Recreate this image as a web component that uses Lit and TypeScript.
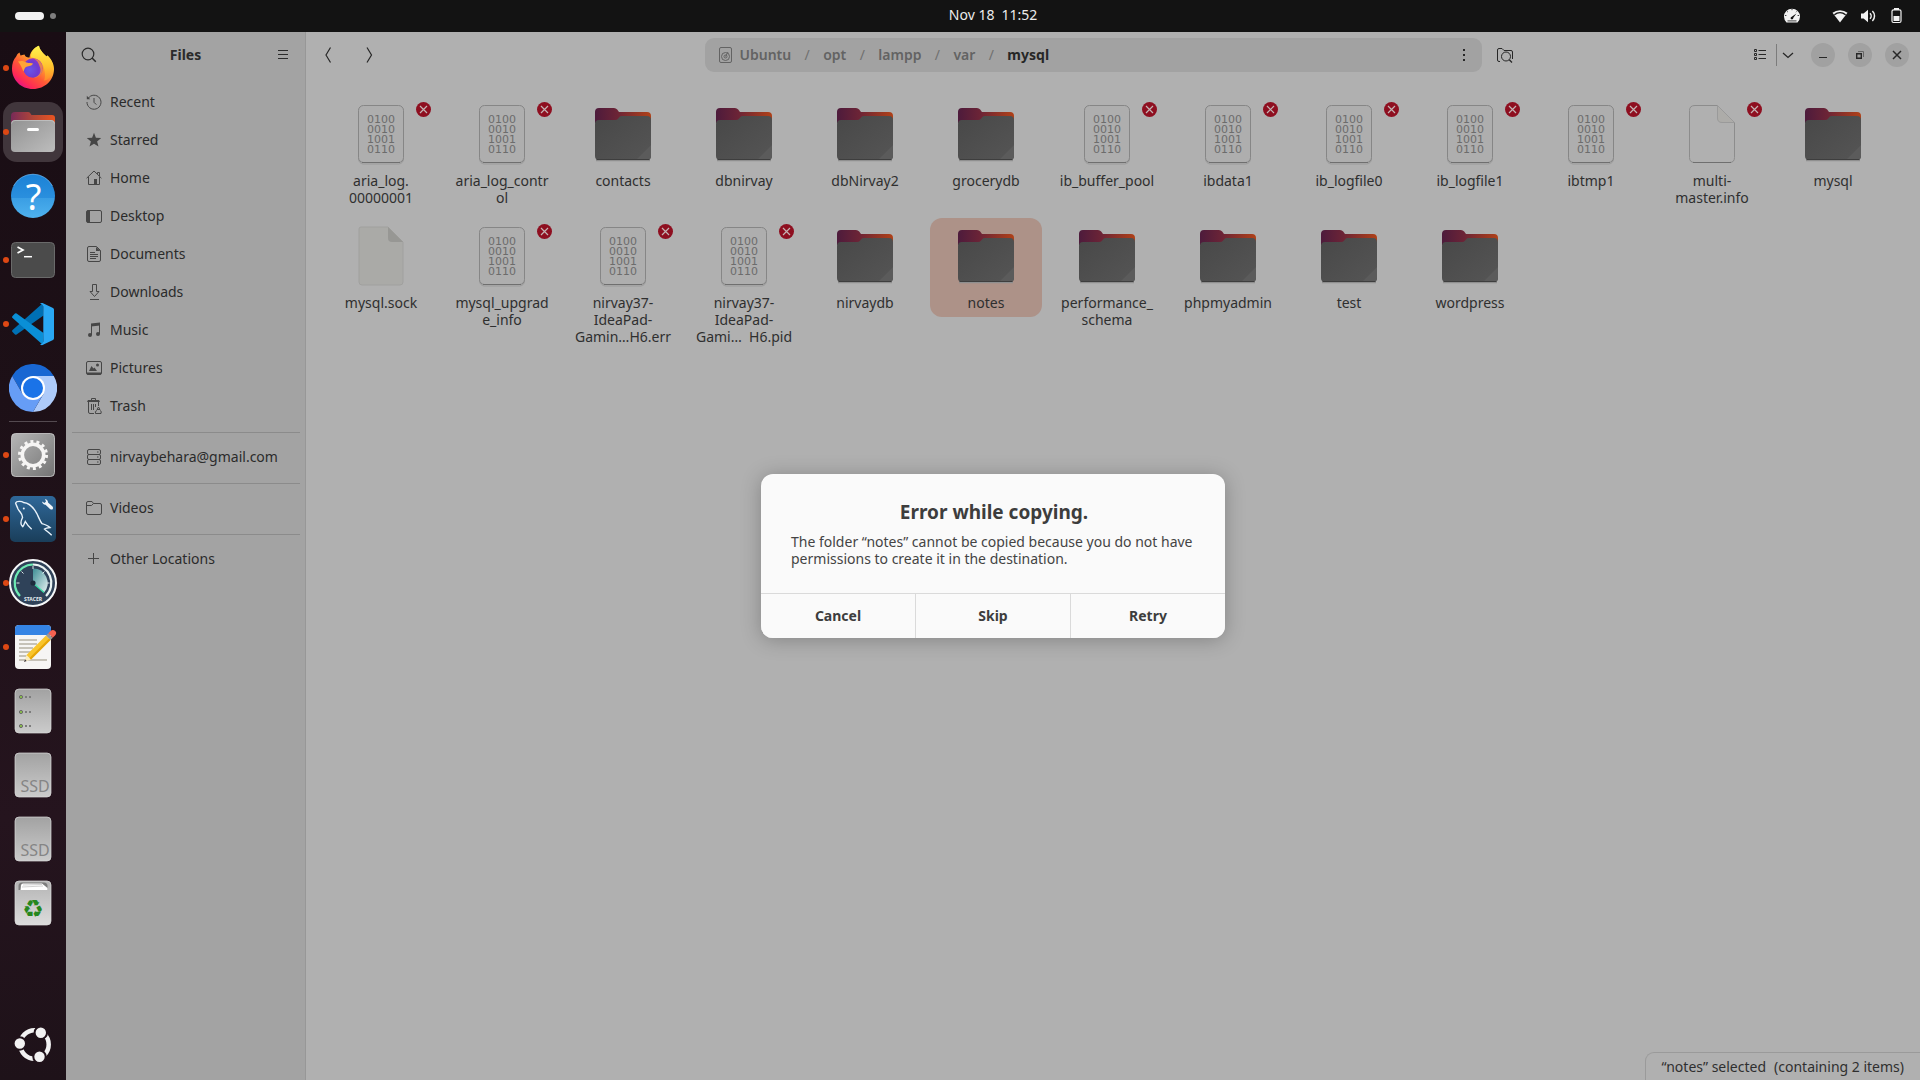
import { LitElement, html, svg, css, nothing, TemplateResult } from "lit";
import { customElement } from "lit/decorators.js";
import { classMap } from "lit/directives/class-map.js";

const base = css`
  * {
    box-sizing: border-box;
  }
  button {
    font: inherit;
    color: inherit;
    background: none;
    border: 0;
    padding: 0;
    margin: 0;
  }
  ul {
    list-style: none;
    margin: 0;
    padding: 0;
  }
  svg {
    display: block;
    flex: none;
  }
`;

/* ---------- Top bar ---------- */

@customElement("desktop-topbar")
export class DesktopTopbar extends LitElement {
  static styles = [
    base,
    css`
      :host {
        display: grid;
        grid-template-columns: 66px 1fr auto 1fr;
        align-items: center;
        height: 32px;
        background: #131313;
        color: #ececec;
      }
      .spaces {
        display: flex;
        align-items: center;
        gap: 6px;
        padding-left: 15px;
      }
      .current {
        width: 29px;
        height: 8px;
        border-radius: 4px;
        background: #f2f2f2;
      }
      .other {
        width: 6px;
        height: 6px;
        border-radius: 3px;
        background: #7f7f7f;
      }
      .clock {
        grid-column: 3;
        display: flex;
        gap: 7px;
        padding-bottom: 2px;
        line-height: 20px;
      }
      .tray {
        display: flex;
        justify-content: flex-end;
        align-items: center;
        gap: 12px;
        padding-right: 16px;
      }
      .gauge {
        margin-right: 20px;
      }
    `,
  ];

  render() {
    return html`
      <button class="spaces" aria-label="Workspaces">
        <span class="current"></span><span class="other"></span>
      </button>
      <button class="clock"><span>Nov 18</span><span>11:52</span></button>
      <div class="tray">
        <svg class="gauge" width="16" height="16" viewBox="0 0 16 16">
          <path d="M2.500 14.500A8 8 0 1 1 13.500 14.500Z" fill="#f2f2f2" />
          <path d="M7 9.200L12.400 5.400L9.200 9.900A1.300 1.300 0 1 1 7 9.200Z" fill="#131313" />
          <path d="M3.500 12.900H12.500" stroke="#131313" stroke-width=".8" />
          <path d="M1 7.500H2.400M8 1V2.200M3.200 3.400L4 4.200M12.800 3.400L12 4.200M13.600 7.500H15" stroke="#131313" stroke-width=".8" />
        </svg>
        <svg width="16" height="16" viewBox="0 0 16 16">
          <path d="M.5 4.800A12 12 0 0 1 15.500 4.800L8 14.500Z" fill="#f2f2f2" />
          <path d="M2.400 6.700A9 9 0 0 1 13.600 6.700" fill="none" stroke="#131313" stroke-width="1.400" />
        </svg>
        <svg width="16" height="16" viewBox="0 0 16 16">
          <path d="M1 5.500H3.600L8 1.800V14.200L3.600 10.500H1Z" fill="#f2f2f2" />
          <path d="M10 5.200A4 4 0 0 1 10 10.800M12.400 3A7 7 0 0 1 12.400 13" fill="none" stroke="#f2f2f2" stroke-width="1.500" />
        </svg>
        <svg width="16" height="16" viewBox="0 0 16 16">
          <path d="M6 0H11V2H6Z" fill="#f2f2f2" />
          <rect x="4" y="1.800" width="9" height="12.700" rx="1.500" fill="none" stroke="#f2f2f2" stroke-width="1.200" />
          <path d="M5.500 8H11.500V13H5.500Z" fill="#f2f2f2" />
        </svg>
      </div>
    `;
  }
}

/* ---------- Dock ---------- */

interface DockApp {
  name: string;
  icon: TemplateResult;
  running?: boolean;
  active?: boolean;
}

const drive = (id: string, face: unknown) => html`
  <svg width="48" height="48" viewBox="0 0 48 48">
    <defs>
      <linearGradient id=${id} x1="0" y1="0" x2="0" y2="1">
        <stop offset="0" stop-color="#a2a2a2" />
        <stop offset="1" stop-color="#cbcbcb" />
      </linearGradient>
    </defs>
    <rect x="6" y="2" width="36" height="44" rx="4" fill="url(#${id})" stroke="#dadada" stroke-opacity=".7" />
    ${face}
  </svg>
`;

const ssdFace = () => svg`<text x="26" y="41" text-anchor="middle" font-size="16" fill="#858585">SSD</text>`;

const serverFace = () => svg`
  <g fill="#8bc34a" stroke="#6b6b6b">
    <circle cx="12" cy="10" r="1.600" />
    <circle cx="12" cy="25" r="1.600" />
    <circle cx="12" cy="39" r="1.600" />
  </g>
  <path d="M16 10H18M20 10H22M16 25H18M20 25H22M16 39H18M20 39H22" stroke="#7d7d7d" stroke-width="2" />
`;

const APPS: DockApp[] = [
  {
    name: "Firefox",
    running: true,
    icon: html`<svg width="48" height="48" viewBox="0 0 48 48">
      <defs>
        <linearGradient id="fx-a" x1=".85" y1=".1" x2=".2" y2=".95">
          <stop offset="0" stop-color="#fff44f" />
          <stop offset=".3" stop-color="#ffb02e" />
          <stop offset=".6" stop-color="#ff5a36" />
          <stop offset=".85" stop-color="#ff2a55" />
          <stop offset="1" stop-color="#e31587" />
        </linearGradient>
        <radialGradient id="fx-b" cx=".35" cy=".6" r=".7">
          <stop offset="0" stop-color="#6a55e8" />
          <stop offset=".6" stop-color="#6f3bd0" />
          <stop offset="1" stop-color="#a632c8" />
        </radialGradient>
        <linearGradient id="fx-c" x1="0" y1="0" x2="0" y2="1">
          <stop offset="0" stop-color="#fff44f" />
          <stop offset=".6" stop-color="#ffc22e" />
          <stop offset="1" stop-color="#ff8a2a" />
        </linearGradient>
      </defs>
      <path d="M24 45C12 45 3 36 3 24.500C3 19.500 4.500 15.500 7 12.800L8.500 10L10.500 8.500L11.500 11.500L15.500 10.500C16.500 13 18 13.600 20.500 13.400C21 9 24 4 30 1.800C30.500 6 34 9 37.500 12.500L38.500 11.500C42 15 45 19.500 45 25C45 36 36 45 24 45Z" fill="url(#fx-a)" />
      <path d="M22 13.500C21.500 8.500 25 3.800 30 1.800C30.500 6 34 9 37.500 12.500L38.500 11.500C42.500 16 45 20 44 27C43 33 39 36 35 36.500C37 33 36 25 33.500 20.500C31 16 27 14 22 13.500Z" fill="url(#fx-c)" />
      <circle cx="24" cy="24" r="9.800" fill="url(#fx-b)" />
      <path d="M9 17.500C12 16.500 15 16.800 17.500 18.500C20 19.200 22.500 19 24 19.500C23 22 20 22 17.500 22.800C15.500 23.500 15.500 26 14.300 27.500C13 24 11.500 20 9 17.500Z" fill="#ffa436" />
      <path d="M25 14.500C30.500 15.500 34.500 20 33.500 26C32.500 31 29 33.500 25 34C31 32 33 27 30.500 22C29.500 19.500 29 17 25 14.500Z" fill="#ff9a2e" opacity=".75" />
    </svg>`,
  },
  {
    name: "Files",
    running: true,
    active: true,
    icon: html`<svg width="48" height="48" viewBox="0 0 48 48">
      <defs>
        <linearGradient id="fi-a" x1="0" y1="0" x2="1" y2="0">
          <stop offset="0" stop-color="#782a58" />
          <stop offset=".5" stop-color="#b04638" />
          <stop offset="1" stop-color="#e95420" />
        </linearGradient>
        <linearGradient id="fi-b" x1="0" y1="0" x2="1" y2="1">
          <stop offset="0" stop-color="#929292" />
          <stop offset="1" stop-color="#bdbdbd" />
        </linearGradient>
      </defs>
      <path d="M2 8Q2 4 6 4H19Q20.500 4 21.300 5.300L22.500 7H43Q46 7 46 10V20H2Z" fill="url(#fi-a)" />
      <rect x="2" y="12" width="44" height="32" rx="4" fill="url(#fi-b)" />
      <path d="M2.500 15.500Q3 12.500 6 12.500H42Q45 12.500 45.500 15.500" fill="none" stroke="#c8c8c8" stroke-opacity=".7" />
      <rect x="18" y="20" width="12" height="3" rx="1.500" fill="#fff" />
    </svg>`,
  },
  {
    name: "Help",
    icon: html`<svg width="48" height="48" viewBox="0 0 48 48">
      <defs>
        <linearGradient id="he-a" x1="0" y1="0" x2="0" y2="1">
          <stop offset="0" stop-color="#1b82d6" />
          <stop offset=".54" stop-color="#2a8fde" />
          <stop offset=".55" stop-color="#3a9ee4" />
          <stop offset="1" stop-color="#4fb2ee" />
        </linearGradient>
      </defs>
      <circle cx="24" cy="24" r="22" fill="url(#he-a)" />
      <path d="M4.500 14A22 22 0 0 1 43.500 14" fill="none" stroke="#7dbcf0" stroke-opacity=".6" />
      <text x="24.500" y="38" text-anchor="middle" font-size="36" fill="#fff">?</text>
    </svg>`,
  },
  {
    name: "Terminal",
    running: true,
    icon: html`<svg width="48" height="48" viewBox="0 0 48 48">
      <rect x="2.500" y="6.500" width="43" height="35" rx="4" fill="#4b4b4b" stroke="#6a6a6a" />
      <path d="M8.500 11L14 14L8.500 17" fill="none" stroke="#fff" stroke-width="1.700" />
      <path d="M15 20.700H23" stroke="#fff" stroke-width="1.500" />
    </svg>`,
  },
  {
    name: "Visual Studio Code",
    running: true,
    icon: html`<svg width="48" height="48" viewBox="0 0 48 48">
      <path d="M34 3L3.300 30.300Q2.800 31 3.300 31.700L6 34.500Q6.800 35 7.600 34.500L34.500 15.500Z" fill="#0070b4" />
      <path d="M34 45L3.300 17.700Q2.800 17 3.300 16.300L6 13.500Q6.800 13 7.600 13.500L34.500 33Z" fill="#0a8fd6" />
      <path d="M33.500 3L44 8Q45 8.600 45 9.800V38.200Q45 39.400 44 40L33.500 45Q32 45.500 31 44Q34 44.500 34.300 41.500V6.500Q34 3.500 31 4Q32 2.500 33.500 3Z" fill="#2aa8f4" />
    </svg>`,
  },
  {
    name: "Chromium",
    icon: html`<svg width="48" height="48" viewBox="0 0 48 48">
      <path d="M3.200 12A24 24 0 0 1 44.800 12H24V24L13.600 30Z" fill="#1967d2" />
      <path d="M44.800 12A24 24 0 0 1 24 48L34.400 30L24 24V12Z" fill="#aecbfa" />
      <path d="M24 48A24 24 0 0 1 3.200 12L13.600 30L24 24L34.400 30Z" fill="#669df6" />
      <circle cx="24" cy="24" r="12" fill="#fff" />
      <circle cx="24" cy="24" r="10" fill="#1a73e8" />
    </svg>`,
  },
];

const WINDOWS: DockApp[] = [
  {
    name: "Settings",
    running: true,
    icon: html`<svg width="48" height="48" viewBox="0 0 48 48">
      <defs>
        <linearGradient id="se-a" x1="0" y1="0" x2="1" y2="1">
          <stop offset="0" stop-color="#b6b6b6" />
          <stop offset="1" stop-color="#747474" />
        </linearGradient>
      </defs>
      <rect x="2.500" y="2.500" width="43" height="43" rx="4" fill="url(#se-a)" stroke="#cfcfcf" stroke-opacity=".8" />
      <circle cx="24" cy="24" r="10.700" fill="none" stroke="#f6f5f4" stroke-width="3.600" />
      <circle cx="24" cy="24" r="13.500" fill="none" stroke="#f6f5f4" stroke-width="3" stroke-dasharray="3 3.059" />
    </svg>`,
  },
  {
    name: "MySQL Workbench",
    running: true,
    icon: html`<svg width="48" height="48" viewBox="0 0 48 48">
      <defs>
        <linearGradient id="my-a" x1="0" y1="0" x2="0" y2="1">
          <stop offset="0" stop-color="#2f6899" />
          <stop offset="1" stop-color="#1a3e5a" />
        </linearGradient>
      </defs>
      <rect x="1" y="1" width="46" height="46" rx="5" fill="url(#my-a)" />
      <path d="M22.700 34.300C20 32 18 29.500 16.300 26.500C15.500 28 15 30.500 13.700 31.700C11.500 30 11.500 26.500 13.500 22.500C13.800 19 11 17.500 9 14C7.800 11 7 9.500 6.600 8C7.500 6 12.500 5.800 14.500 7.500C20 8 24.500 12.500 27.700 18.300C29.500 22 31 26 33 28.600C36 29.500 39 30.500 41 32.500C38.500 32.800 37 33 35.500 34C37.500 36 40.500 38 42.700 40.300" fill="none" stroke="#e8f2fa" stroke-width="1.400" />
      <circle cx="14.800" cy="13.600" r="1" fill="#e8f2fa" />
      <path d="M33 6.500Q33.500 9.500 36.500 9.800L41 14Q42.800 15 43.800 14Q44.500 12.800 43.500 11.500L39 7.500Q39 4.500 36 4L37 6.500L35.500 8Z" fill="#f2f7fb" />
    </svg>`,
  },
  {
    name: "Stacer",
    running: true,
    icon: html`<svg width="48" height="48" viewBox="0 0 48 48">
      <defs>
        <linearGradient id="st-a" x1="0" y1="0" x2="1" y2="1">
          <stop offset="0" stop-color="#3f8f96" />
          <stop offset="1" stop-color="#e4f0f0" />
        </linearGradient>
      </defs>
      <circle cx="24" cy="24" r="23" fill="#2f4259" stroke="#f5f7f8" stroke-width="2" />
      <path d="M11 37A18.500 18.500 0 0 1 24 5.500" fill="none" stroke="#6debb4" stroke-width="2.200" />
      <path d="M24 5.500A18.500 18.500 0 0 1 37 37" fill="none" stroke="#eaf3f3" stroke-width="2.200" />
      <path d="M24 24V9.500A14.500 14.500 0 0 1 35.300 33.200Z" fill="url(#st-a)" />
      <path d="M24 24L35 33.500" stroke="#3be0a8" stroke-width="1.200" />
      <path d="M24 7V10M7.500 24H10.500M37.500 24H40.500M12.500 12.500L14.500 14.500M35.500 12.500L33.500 14.500" stroke="#dfe7ea" />
      <circle cx="24" cy="24" r="2.600" fill="#1d2b3c" />
      <text x="24" y="41.500" text-anchor="middle" font-size="5" font-weight="700" fill="#e6eef2">STACER</text>
    </svg>`,
  },
  {
    name: "Text Editor",
    running: true,
    icon: html`<svg width="48" height="48" viewBox="0 0 48 48">
      <rect x="6" y="2" width="36" height="44" rx="4" fill="#f6f5f4" />
      <path d="M6 12V6Q6 2 10 2H38Q42 2 42 6V12Z" fill="#3584e4" />
      <path d="M10 17H28M10 21H28M10 25H24M10 29H22M10 33H18M10 37H38" stroke="#c6c2b8" stroke-width="1.800" />
      <path d="M15 39L17.500 32L22 36.500Z" fill="#fbeec0" />
      <path d="M15 39L16 36.300L17.700 38Z" fill="#3d3846" />
      <path d="M17.500 32L37 12.500L41.500 17L22 36.500Z" fill="#f9c52b" />
      <path d="M20.500 35L40 15.500L41.500 17L22 36.500Z" fill="#e5a50a" />
      <path d="M37 12.500L39.300 10.200L43.800 14.700L41.500 17Z" fill="#9a9996" />
      <path d="M39.300 10.200L41.500 8Q44 6 46.200 8Q48.300 10.200 46 12.500L43.800 14.700Z" fill="#f66151" />
    </svg>`,
  },
  { name: "Server", icon: drive("dr-a", serverFace()) },
  { name: "SSD volume 1", icon: drive("dr-b", ssdFace()) },
  { name: "SSD volume 2", icon: drive("dr-c", ssdFace()) },
  {
    name: "Trash",
    icon: html`<svg width="48" height="48" viewBox="0 0 48 48">
      <defs>
        <linearGradient id="tr-a" x1="0" y1="0" x2="0" y2="1">
          <stop offset="0" stop-color="#b4b4b4" />
          <stop offset="1" stop-color="#dcdcdc" />
        </linearGradient>
      </defs>
      <rect x="6" y="2" width="36" height="44" rx="4" fill="url(#tr-a)" stroke="#dedede" stroke-opacity=".7" />
      <path d="M9.500 11V7Q9.500 3.500 13 3.500H35Q38.500 3.500 38.500 7V11Z" fill="#7c7c7c" />
      <path d="M11.500 11L12 6.500Q12.300 4.500 14 4.500H33L38.500 9V11Z" fill="#fff" />
      <path d="M13 8L34 7M14 6L33 5.500" stroke="#bdbdbd" stroke-width=".7" />
      <text class="recycle" x="24" y="38" text-anchor="middle" font-size="24" fill="#26871d">♻</text>
    </svg>`,
  },
];

@customElement("desktop-dock")
export class DesktopDock extends LitElement {
  static styles = [
    base,
    css`
      :host {
        display: flex;
        flex-direction: column;
        width: 66px;
        padding: 4px 3px;
        background: linear-gradient(#190d14, #1d1017 35%, #25141e 75%, #1e1219);
      }
      .slot {
        padding: 2px 0;
      }
      .app {
        display: flex;
        align-items: center;
        justify-content: center;
        position: relative;
        width: 60px;
        height: 60px;
        border-radius: 14px;
      }
      .active {
        background: #41363c;
      }
      .running::before {
        content: "";
        position: absolute;
        left: 0;
        top: 27px;
        width: 6px;
        height: 6px;
        border-radius: 3px;
        background: #dd4814;
      }
      .split {
        height: 1px;
        margin: 1px 6px;
        background: #544a50;
      }
      .grow {
        flex: 1;
      }
      .recycle {
        font-family: "DejaVu Sans", sans-serif;
      }
    `,
  ];

  private slotFor(app: DockApp) {
    return html`<li class="slot">
      <button
        class=${classMap({ app: true, active: !!app.active, running: !!app.running })}
        aria-label=${app.name}
      >
        ${app.icon}
      </button>
    </li>`;
  }

  render() {
    return html`
      <ul>${APPS.map((a) => this.slotFor(a))}</ul>
      <div class="split"></div>
      <ul class="grow">${WINDOWS.map((a) => this.slotFor(a))}</ul>
      <div class="slot">
        <button class="app" aria-label="Show Applications">
          <svg width="48" height="48" viewBox="0 0 48 48">
            <circle cx="25.500" cy="24.500" r="14.200" fill="none" stroke="#f2f2f2" stroke-width="4.500" />
            <g fill="#f2f2f2" stroke="#21131b" stroke-width="2">
              <circle cx="31.800" cy="12.700" r="6.200" />
              <circle cx="10.800" cy="23.500" r="6.200" />
              <circle cx="30.500" cy="36.700" r="6.200" />
            </g>
          </svg>
        </button>
      </div>
    `;
  }
}

/* ---------- Sidebar ---------- */

interface Place {
  label: string;
  icon: TemplateResult;
}

const PLACES: Place[][] = [
  [
    {
      label: "Recent",
      icon: html`<svg width="16" height="16" viewBox="0 0 16 16">
        <path d="M2.200 4.300A7 7 0 1 1 1 8M8 4V8.300L10.300 10.600" fill="none" stroke="currentColor" />
        <path d="M.8 1.800V5.200H4.200Z" fill="currentColor" />
      </svg>`,
    },
    {
      label: "Starred",
      icon: html`<svg width="16" height="16" viewBox="0 0 16 16">
        <path d="M8 .8L9.900 5.800L15.200 6.100L11.100 9.400L12.500 14.600L8 11.700L3.500 14.600L4.900 9.400L.8 6.100L6.100 5.800Z" fill="currentColor" />
      </svg>`,
    },
    {
      label: "Home",
      icon: html`<svg width="16" height="16" viewBox="0 0 16 16">
        <path d="M.6 8.200L8 1L15.400 8.200M2.500 7V14.500H13.500V7M11.500 4V2.500H13.500V6" fill="none" stroke="currentColor" />
        <path d="M8 9H11V14.500H8Z" fill="currentColor" />
      </svg>`,
    },
    {
      label: "Desktop",
      icon: html`<svg width="16" height="16" viewBox="0 0 16 16">
        <rect x=".5" y="2.500" width="15" height="12" rx="1.500" fill="none" stroke="currentColor" />
        <path d="M1 2.500H4V14.500H1Z" fill="currentColor" />
      </svg>`,
    },
    {
      label: "Documents",
      icon: html`<svg width="16" height="16" viewBox="0 0 16 16">
        <path d="M3 .5H10.500L14.500 4.500V14Q14.500 15.500 13 15.500H3Q1.500 15.500 1.500 14V2Q1.500 .5 3 .5ZM4 6.500H9M4 8.500H12M4 10.500H12M4 12.500H10" fill="none" stroke="currentColor" />
        <path d="M10 1V5H14.500Z" fill="currentColor" />
      </svg>`,
    },
    {
      label: "Downloads",
      icon: html`<svg width="16" height="16" viewBox="0 0 16 16">
        <path d="M6.500 .5H10.500V7.500H13L8.500 12.500L4 7.500H6.500ZM4 15.500H13" fill="none" stroke="currentColor" />
      </svg>`,
    },
    {
      label: "Music",
      icon: html`<svg width="16" height="16" viewBox="0 0 16 16">
        <path d="M5 1.500L14 .5V3.500L5 4.500Z" fill="currentColor" />
        <path d="M5.500 3V13M13.500 2V12" stroke="currentColor" />
        <circle cx="4" cy="13" r="2" fill="currentColor" />
        <circle cx="12" cy="12" r="2" fill="currentColor" />
      </svg>`,
    },
    {
      label: "Pictures",
      icon: html`<svg width="16" height="16" viewBox="0 0 16 16">
        <rect x=".5" y="1.500" width="15" height="13" rx="1.500" fill="none" stroke="currentColor" />
        <path d="M1 12.500H15V14.500H1ZM3 11L5.500 6L7.500 8.500L8.500 7.500L11 11Z" fill="currentColor" />
        <circle cx="11.500" cy="5" r="1.500" fill="currentColor" />
      </svg>`,
    },
    {
      label: "Trash",
      icon: html`<svg width="16" height="16" viewBox="0 0 16 16">
        <path d="M5.500 2V.5H9.500V2M2.500 4V14Q2.500 15.500 4 15.500H8M12.500 4V8M5.500 6V12M7.500 6V12M9.500 6V9" fill="none" stroke="currentColor" />
        <path d="M2 2H13L14 4H1Z" fill="currentColor" />
        <path d="M12.500 9L14 11.500H11ZM11 12.500Q8.500 13 9.500 15.500H15Q16 13 14 12.500" fill="none" stroke="currentColor" />
      </svg>`,
    },
  ],
  [
    {
      label: "nirvaybehara@gmail.com",
      icon: html`<svg width="16" height="16" viewBox="0 0 16 16">
        <path d="M3 .5H13Q14.500 .5 14.500 2V4Q14.500 5.500 13 5.500H3Q1.500 5.500 1.500 4V2Q1.500 .5 3 .5ZM3 5.500Q1.500 5.500 1.500 7V9Q1.500 10.500 3 10.500H13Q14.500 10.500 14.500 9V7Q14.500 5.500 13 5.500M3 10.500Q1.500 10.500 1.500 12V14Q1.500 15.500 3 15.500H13Q14.500 15.500 14.500 14V12Q14.500 10.500 13 10.500" fill="none" stroke="currentColor" />
        <path d="M11 3H12.500M11 8H12.500M11 13H12.500" stroke="currentColor" />
      </svg>`,
    },
  ],
  [
    {
      label: "Videos",
      icon: html`<svg width="16" height="16" viewBox="0 0 16 16">
        <path d="M2 1.500H6L7.500 3.500H14Q15.500 3.500 15.500 5V13Q15.500 14.500 14 14.500H2Q.5 14.500 .5 13V3Q.5 1.500 2 1.500ZM.5 5.500H5.500L7.500 3.500" fill="none" stroke="currentColor" />
      </svg>`,
    },
  ],
  [
    {
      label: "Other Locations",
      icon: html`<svg width="16" height="16" viewBox="0 0 16 16">
        <path d="M7.500 2V13M2 7.500H13" stroke="currentColor" />
      </svg>`,
    },
  ],
];

@customElement("files-sidebar")
export class FilesSidebar extends LitElement {
  static styles = [
    base,
    css`
      :host {
        display: block;
        width: 240px;
        background: #a3a3a3;
        border-right: 1px solid #979797;
        color: #2b2b2b;
      }
      .header {
        display: flex;
        align-items: center;
        justify-content: space-between;
        height: 46px;
        padding: 0 6px;
      }
      .tool {
        display: flex;
        align-items: center;
        justify-content: center;
        width: 34px;
        height: 34px;
      }
      .title {
        margin: 0;
        font-size: 14px;
        font-weight: 700;
      }
      .places {
        padding-top: 5px;
      }
      .place {
        display: flex;
        align-items: center;
        gap: 8px;
        height: 38px;
        padding-left: 20px;
        color: inherit;
        text-decoration: none;
        white-space: nowrap;
      }
      .place svg {
        color: #464646;
      }
      .rule {
        height: 1px;
        margin: 7px 5px 5px 6px;
        background: #8b8b8b;
      }
    `,
  ];

  render() {
    return html`
      <div class="header">
        <button class="tool" aria-label="Search">
          <svg width="16" height="16" viewBox="0 0 16 16">
            <circle cx="7" cy="7" r="5.800" fill="none" stroke="currentColor" stroke-width="1.200" />
            <path d="M11 11L14.800 14.800" stroke="currentColor" stroke-width="1.500" />
          </svg>
        </button>
        <h1 class="title">Files</h1>
        <button class="tool" aria-label="Main menu">
          <svg width="16" height="16" viewBox="0 0 16 16">
            <path d="M4 3.500H14M4 7.500H14M4 11.500H14" stroke="currentColor" />
          </svg>
        </button>
      </div>
      <nav class="places">
        ${PLACES.map(
          (group, i) => html`
            ${i ? html`<div class="rule"></div>` : nothing}
            ${group.map((p) => html`<a class="place" href="#">${p.icon}<span>${p.label}</span></a>`)}
          `
        )}
      </nav>
    `;
  }
}

/* ---------- Header bar ---------- */

@customElement("files-header")
export class FilesHeader extends LitElement {
  static styles = [
    base,
    css`
      :host {
        display: grid;
        grid-template-columns: 1fr minmax(0, 817px) 1fr;
        align-items: center;
        height: 46px;
        color: #272727;
      }
      .group {
        display: flex;
        align-items: center;
        gap: 6px;
      }
      .nav {
        padding-left: 6px;
      }
      .tool {
        display: flex;
        align-items: center;
        justify-content: center;
        width: 34px;
        height: 34px;
      }
      .path {
        display: flex;
        align-items: center;
        flex: 1;
        height: 34px;
        padding-left: 12px;
        border-radius: 9px;
        background: #a2a2a2;
        font-weight: 600;
        color: #636363;
      }
      .crumb {
        display: flex;
        align-items: center;
        gap: 7px;
      }
      .slash {
        width: 32px;
        text-align: center;
        font-weight: 400;
        color: #707070;
      }
      .here {
        color: #272727;
        font-weight: 700;
      }
      .more {
        margin-left: auto;
        width: 36px;
        color: #272727;
      }
      .end {
        display: flex;
        align-items: center;
        justify-content: flex-end;
        padding-right: 11px;
      }
      .bar {
        width: 1px;
        height: 22px;
        background: #7c7c7c;
      }
      .narrow {
        width: 24px;
        margin-right: 10px;
      }
      .window {
        display: flex;
        gap: 13px;
      }
      .round {
        display: flex;
        align-items: center;
        justify-content: center;
        width: 24px;
        height: 24px;
        border-radius: 12px;
        background: #a1a1a1;
      }
    `,
  ];

  render() {
    const parents = ["opt", "lampp", "var"];
    return html`
      <div class="group nav">
        <button class="tool" aria-label="Back">
          <svg width="16" height="16" viewBox="0 0 16 16">
            <path d="M9.500 .5L5 8L9.500 15.500" fill="none" stroke="currentColor" stroke-width="1.200" />
          </svg>
        </button>
        <button class="tool" aria-label="Forward">
          <svg width="16" height="16" viewBox="0 0 16 16">
            <path d="M6 .5L10.500 8L6 15.500" fill="none" stroke="currentColor" stroke-width="1.200" />
          </svg>
        </button>
      </div>
      <div class="group">
        <div class="path">
          <button class="crumb">
            <svg width="16" height="16" viewBox="0 0 16 16">
              <rect x="2.500" y=".5" width="12" height="15" rx="1.500" fill="none" stroke="currentColor" />
              <circle cx="8.500" cy="9.500" r="4" fill="none" stroke="currentColor" />
              <path d="M11 5L8.500 9.500" stroke="currentColor" />
              <circle cx="8.500" cy="9.500" r="1.500" fill="none" stroke="currentColor" />
            </svg>
            Ubuntu
          </button>
          ${parents.map((p) => html`<span class="slash">/</span><button>${p}</button>`)}
          <span class="slash">/</span><button class="here">mysql</button>
          <button class="tool more" aria-label="Folder menu">
            <svg width="16" height="16" viewBox="0 0 16 16">
              <path d="M7 2H9V4H7ZM7 7H9V9H7ZM7 12H9V14H7Z" fill="currentColor" />
            </svg>
          </button>
        </div>
        <button class="tool" aria-label="Search folder">
          <svg width="16" height="16" viewBox="0 0 16 16">
            <path d="M3 14.500H2Q.5 14.500 .5 13V3Q.5 1.500 2 1.500H5L7 3.500H14Q15.500 3.500 15.500 5V12" fill="none" stroke="currentColor" />
            <circle cx="9" cy="9.500" r="4.500" fill="none" stroke="currentColor" />
            <path d="M12.300 12.800L15 15.500" stroke="currentColor" stroke-width="1.300" />
          </svg>
        </button>
      </div>
      <div class="end">
        <button class="tool" aria-label="List view">
          <svg width="16" height="16" viewBox="0 0 16 16">
            <path d="M3.500 2.500H5.500V4.500H3.500ZM3.500 6.500H5.500V8.500H3.500ZM3.500 10.500H5.500V12.500H3.500ZM7.500 3.500H15M7.500 7.500H15M7.500 11.500H15" fill="none" stroke="currentColor" />
          </svg>
        </button>
        <span class="bar"></span>
        <button class="tool narrow" aria-label="View options">
          <svg width="16" height="16" viewBox="0 0 16 16">
            <path d="M2 6L7 10.500L12 6" fill="none" stroke="currentColor" stroke-width="1.300" />
          </svg>
        </button>
        <div class="window">
          <button class="round" aria-label="Minimize">
            <svg width="16" height="16" viewBox="0 0 16 16">
              <path d="M4 10.500H12" stroke="currentColor" />
            </svg>
          </button>
          <button class="round" aria-label="Restore">
            <svg width="16" height="16" viewBox="0 0 16 16">
              <path d="M4.700 6.700H9.300V11.300H4.700Z" fill="none" stroke="currentColor" stroke-width="1.400" />
              <path d="M6 4.500H11.500V10" fill="none" stroke="#666" />
            </svg>
          </button>
          <button class="round" aria-label="Close">
            <svg width="16" height="16" viewBox="0 0 16 16">
              <path d="M4 4L12 12M12 4L4 12" stroke="currentColor" stroke-width="1.500" />
            </svg>
          </button>
        </div>
      </div>
    `;
  }
}

/* ---------- File grid ---------- */

type Kind = "binary" | "folder" | "text" | "socket";

interface Entry {
  lines: string[];
  kind: Kind;
  locked?: boolean;
  selected?: boolean;
}

const folder = (...lines: string[]): Entry => ({ lines, kind: "folder" });
const binary = (...lines: string[]): Entry => ({ lines, kind: "binary", locked: true });

const ENTRIES: Entry[] = [
  binary("aria_log.", "00000001"),
  binary("aria_log_contr", "ol"),
  folder("contacts"),
  folder("dbnirvay"),
  folder("dbNirvay2"),
  folder("grocerydb"),
  binary("ib_buffer_pool"),
  binary("ibdata1"),
  binary("ib_logfile0"),
  binary("ib_logfile1"),
  binary("ibtmp1"),
  { lines: ["multi-", "master.info"], kind: "text", locked: true },
  folder("mysql"),
  { lines: ["mysql.sock"], kind: "socket" },
  binary("mysql_upgrad", "e_info"),
  binary("nirvay37-", "IdeaPad-", "Gamin…H6.err"),
  binary("nirvay37-", "IdeaPad-", "Gami…  H6.pid"),
  folder("nirvaydb"),
  { lines: ["notes"], kind: "folder", selected: true },
  folder("performance_", "schema"),
  folder("phpmyadmin"),
  folder("test"),
  folder("wordpress"),
];

const BIT_ROWS = ["0100", "0010", "1001", "0110"];

@customElement("file-grid")
export class FileGrid extends LitElement {
  static styles = [
    base,
    css`
      :host {
        display: block;
        padding: 18px 19px;
        color: #2f2f2f;
      }
      .defs {
        position: absolute;
      }
      .grid {
        display: grid;
        grid-template-columns: repeat(auto-fill, 112px);
        align-items: start;
        gap: 6px 9px;
      }
      .item {
        display: flex;
        flex-direction: column;
        align-items: center;
        gap: 6px;
        position: relative;
        width: 100%;
        padding: 6px 0;
        border-radius: 12px;
      }
      .selected {
        background: #ad9288;
      }
      .label {
        line-height: 17px;
        white-space: pre;
      }
      .line {
        display: block;
      }
      .emblem {
        position: absolute;
        top: 6px;
        right: 5px;
      }
      .bits {
        font-family: "DejaVu Sans", sans-serif;
        font-size: 11px;
        fill: #6c6c6c;
      }
    `,
  ];

  private bits() {
    return svg`<g class="bits" text-anchor="middle">
      ${BIT_ROWS.map((row, i) => svg`<text x="32" y=${21 + i * 10}>${row}</text>`)}
    </g>`;
  }

  render() {
    return html`
      <svg class="defs" width="0" height="0" aria-hidden="true">
        <defs>
          <linearGradient id="tab" x1="0" y1="0" x2="1" y2="0">
            <stop offset="0" stop-color="#4d1b3c" />
            <stop offset=".4" stop-color="#6c2436" />
            <stop offset="1" stop-color="#b04118" />
          </linearGradient>
          <linearGradient id="front" x1="0" y1="0" x2="1" y2="1">
            <stop offset="0" stop-color="#484848" />
            <stop offset="1" stop-color="#555" />
          </linearGradient>
        </defs>
        <symbol id="folder" viewBox="0 0 64 64">
          <path d="M4 21V10Q4 6 8 6H23Q25 6 26.200 7.600L28 10H56Q60 10 60 14V21Z" fill="url(#tab)" />
          <path d="M5 58.500H59" stroke="#8f8f8f" stroke-width="1.500" />
          <path d="M4 22Q4 18 8 18H24Q26 18 27.200 16.400L28 15.400Q29 14 31 14H56Q60 14 60 18V54Q60 58 56 58H8Q4 58 4 54Z" fill="url(#front)" />
          <path d="M60 43V54Q60 58 56 58H45Z" fill="#5b5b5b" />
          <path d="M5.500 57.500H58.500" stroke="#3e3e3e" />
        </symbol>
        <symbol id="binary" viewBox="0 0 64 64">
          <rect x="9.500" y="4" width="45" height="58" rx="5" fill="none" stroke="#999" />
          <rect x="9.500" y="3.500" width="45" height="57" rx="5" fill="#aeaeae" stroke="#868686" />
          <path d="M13 60.500H51" stroke="#6f6f6f" />
        </symbol>
        <symbol id="text" viewBox="0 0 64 64">
          <path d="M15 3.500H37.500L54.500 20.500V55.500Q54.500 60.500 49.500 60.500H14.500Q9.500 60.500 9.500 55.500V8.500Q9.500 3.500 15 3.500Z" fill="#b0b0b0" stroke="#8c8c8c" />
          <path d="M37.500 3.500V16Q37.500 20.500 42 20.500H54.500Z" fill="#adaca9" stroke="#9a9a9a" />
          <path d="M13 60.500H51" stroke="#6f6f6f" />
        </symbol>
        <symbol id="socket" viewBox="0 0 64 64">
          <path d="M12 3H39L54 18V58Q54 61 51 61H13Q10 61 10 58V5Q10 3 12 3Z" fill="#aaaaa7" stroke="#a0a09e" />
          <path d="M39 3V14Q39 18 43 18H54Z" fill="#979794" />
        </symbol>
      </svg>
      <ul class="grid">
        ${ENTRIES.map(
          (e) => html`<li>
            <button class=${classMap({ item: true, selected: !!e.selected })}>
              <svg width="64" height="64" viewBox="0 0 64 64">
                <use href="#${e.kind}" />
                ${e.kind === "binary" ? this.bits() : nothing}
              </svg>
              <span class="label">${e.lines.map((l) => html`<span class="line">${l}</span>`)}</span>
              ${e.locked
                ? html`<svg class="emblem" width="16" height="16" viewBox="0 0 16 16">
                    <circle cx="7.500" cy="7.500" r="7.500" fill="#8e0f20" />
                    <path d="M4 4L11 11M11 4L4 11" stroke="#c4b4b4" stroke-width="1.200" />
                  </svg>`
                : nothing}
            </button>
          </li>`
        )}
      </ul>
    `;
  }
}

/* ---------- Error dialog ---------- */

@customElement("error-dialog")
export class ErrorDialog extends LitElement {
  static styles = [
    base,
    css`
      :host {
        display: block;
        width: 464px;
        border-radius: 12px;
        overflow: hidden;
        background: #fafafa;
        color: #3d3d3d;
        box-shadow: 0 2px 20px rgba(0, 0, 0, 0.25);
      }
      .body {
        padding: 25px 28px 26px 30px;
      }
      .title {
        margin: 0 0 7px;
        text-align: center;
        font-size: 19px;
        line-height: 27px;
        font-weight: 700;
      }
      .text {
        margin: 0;
        line-height: 17px;
        color: #444;
      }
      .actions {
        display: grid;
        grid-template-columns: repeat(3, 1fr);
        gap: 1px;
        padding-top: 1px;
        background: #dadada;
      }
      .action {
        height: 44px;
        background: #fafafa;
        font-weight: 700;
      }
    `,
  ];

  render() {
    return html`
      <div class="body" role="alertdialog" aria-labelledby="t" aria-describedby="d">
        <h2 class="title" id="t">Error while copying.</h2>
        <p class="text" id="d">
          The folder “notes” cannot be copied because you do not have permissions to create it in the destination.
        </p>
      </div>
      <div class="actions">
        <button class="action">Cancel</button>
        <button class="action">Skip</button>
        <button class="action">Retry</button>
      </div>
    `;
  }
}

/* ---------- Desktop ---------- */

@customElement("app-root")
export class AppRoot extends LitElement {
  static styles = [
    base,
    css`
      :host {
        display: flex;
        flex-direction: column;
        min-height: 100vh;
        font-family: "Noto Sans", "Open Sans", sans-serif;
        font-size: 14px;
        line-height: 18px;
      }
      .work {
        display: flex;
        flex: 1;
      }
      .window {
        display: flex;
        flex: 1;
        position: relative;
        background: #b0b0b0;
      }
      .main {
        display: flex;
        flex-direction: column;
        flex: 1;
        min-width: 0;
      }
      .files {
        flex: 1;
      }
      .status {
        align-self: flex-end;
        display: flex;
        gap: 8px;
        padding: 5px 16px 4px;
        border: 1px solid #9a9a9a;
        border-width: 1px 0 0 1px;
        border-radius: 9px 0 0 0;
        color: #2f2f2f;
      }
      .modal {
        position: absolute;
        inset: 0;
        display: flex;
        align-items: center;
        justify-content: center;
      }
    `,
  ];

  render() {
    return html`
      <desktop-topbar></desktop-topbar>
      <div class="work">
        <desktop-dock></desktop-dock>
        <div class="window">
          <files-sidebar></files-sidebar>
          <main class="main">
            <files-header></files-header>
            <file-grid class="files"></file-grid>
            <div class="status"><span>“notes” selected</span><span>(containing 2 items)</span></div>
          </main>
          <div class="modal"><error-dialog></error-dialog></div>
        </div>
      </div>
    `;
  }
}
